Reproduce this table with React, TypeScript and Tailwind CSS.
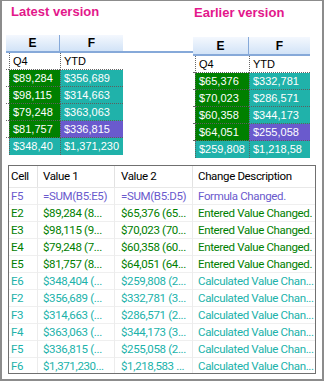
import React from "react";

type Cell = { text: string; bg: string };

const teal = "bg-[#20b2aa]";
const green = "bg-[#008000]";
const purple = "bg-[#6a5acd]";

const latestRows: Cell[][] = [
  [{ text: "$89,284", bg: green }, { text: "$356,689", bg: teal }],
  [{ text: "$98,115", bg: green }, { text: "$314,663", bg: teal }],
  [{ text: "$79,248", bg: green }, { text: "$363,063", bg: teal }],
  [{ text: "$81,757", bg: green }, { text: "$336,815", bg: purple }],
  [{ text: "$348,40", bg: teal }, { text: "$1,371,230", bg: teal }],
];

const earlierRows: Cell[][] = [
  [{ text: "$65,376", bg: green }, { text: "$332,781", bg: teal }],
  [{ text: "$70,023", bg: green }, { text: "$286,571", bg: teal }],
  [{ text: "$60,358", bg: green }, { text: "$344,173", bg: teal }],
  [{ text: "$64,051", bg: green }, { text: "$255,058", bg: purple }],
  [{ text: "$259,808", bg: teal }, { text: "$1,218,58", bg: teal }],
];

const changes = [
  { cell: "F5", v1: "=SUM(B5:E5)", v2: "=SUM(B5:D5)", desc: "Formula Changed.", color: "text-[#6a5acd]" },
  { cell: "E2", v1: "$89,284 (8...", v2: "$65,376 (65...", desc: "Entered Value Changed.", color: "text-[#008000]" },
  { cell: "E3", v1: "$98,115 (9...", v2: "$70,023 (70...", desc: "Entered Value Changed.", color: "text-[#008000]" },
  { cell: "E4", v1: "$79,248 (7...", v2: "$60,358 (60...", desc: "Entered Value Changed.", color: "text-[#008000]" },
  { cell: "E5", v1: "$81,757 (8...", v2: "$64,051 (64...", desc: "Entered Value Changed.", color: "text-[#008000]" },
  { cell: "E6", v1: "$348,404 (...", v2: "$259,808 (2...", desc: "Calculated Value Chan...", color: "text-[#20b2aa]" },
  { cell: "F2", v1: "$356,689 (...", v2: "$332,781 (3...", desc: "Calculated Value Chan...", color: "text-[#20b2aa]" },
  { cell: "F3", v1: "$314,663 (...", v2: "$286,571 (2...", desc: "Calculated Value Chan...", color: "text-[#20b2aa]" },
  { cell: "F4", v1: "$363,063 (...", v2: "$344,173 (3...", desc: "Calculated Value Chan...", color: "text-[#20b2aa]" },
  { cell: "F5", v1: "$336,815 (...", v2: "$255,058 (2...", desc: "Calculated Value Chan...", color: "text-[#20b2aa]" },
  { cell: "F6", v1: "$1,371,230...", v2: "$1,218,583 ...", desc: "Calculated Value Chan...", color: "text-[#20b2aa]" },
];

function SheetGrid({
  rows,
  gutter,
  eWidth,
  fWidth,
  headerH,
}: {
  rows: Cell[][];
  gutter: number;
  eWidth: number;
  fWidth: number;
  headerH: number;
}) {
  return (
    <div className="font-['Liberation_Sans',Arial,sans-serif] text-[11px]">
      {/* Column header */}
      <div className="flex border-b-2 border-[#86a9d9]" style={{ height: headerH }}>
        <div
          className="flex items-center justify-center font-bold text-[12px] text-black bg-gradient-to-b from-[#f4f8fe] to-[#d2e3f7] border-r border-[#86a9d9]"
          style={{ width: gutter + eWidth }}
        >
          E
        </div>
        <div
          className="flex items-center justify-center font-bold text-[12px] text-black bg-gradient-to-b from-[#f4f8fe] to-[#d2e3f7]"
          style={{ width: fWidth }}
        >
          F
        </div>
      </div>

      {/* Label row */}
      <div className="flex h-[17px]">
        <div className="border-b border-dotted border-[#666]" style={{ width: gutter }} />
        <div
          className="flex items-center pl-[3px] text-black border-l border-b border-dotted border-[#666]"
          style={{ width: eWidth }}
        >
          Q4
        </div>
        <div
          className="flex items-center pl-[3px] text-black border-l border-b border-dotted border-[#666]"
          style={{ width: fWidth }}
        >
          YTD
        </div>
      </div>

      {/* Values */}
      {rows.map((row, i) => (
        <div key={i} className="flex h-[17px]">
          <div
            className={i < rows.length - 1 ? "border-b border-dotted border-[#666]" : ""}
            style={{ width: gutter }}
          />
          {row.map((c, j) => (
            <div
              key={j}
              className={`flex items-center pl-[3px] text-white border-l border-dotted border-[#5e5e5e] ${c.bg} ${
                i < rows.length - 1 ? "border-b" : ""
              }`}
              style={{ width: j === 0 ? eWidth : fWidth }}
            >
              {c.text}
            </div>
          ))}
        </div>
      ))}
    </div>
  );
}

export default function App() {
  return (
    <div className="w-[325px] h-[382px] bg-white">
      <div className="w-[324px] h-[381px] border-2 border-t border-[#8c8c8c] flex flex-col overflow-hidden">
        {/* Two versions side by side */}
        <div className="flex h-[164px]">
          <div className="w-[191px] shrink-0">
            <div className="mt-[4px] ml-[9px] leading-none text-[13px] font-bold text-[#e3178b] font-['Liberation_Sans',Arial,sans-serif]">
              Latest version
            </div>
            <div className="mt-[17px] ml-[4px]">
              <SheetGrid rows={latestRows} gutter={3} eWidth={51} fWidth={63} headerH={18} />
            </div>
          </div>
          <div>
            <div className="mt-[5px] ml-[1px] leading-none text-[13px] font-bold text-[#e3178b] font-['Liberation_Sans',Arial,sans-serif]">
              Earlier version
            </div>
            <div className="mt-[18px]">
              <SheetGrid rows={earlierRows} gutter={2} eWidth={54} fWidth={61} headerH={19} />
            </div>
          </div>
        </div>

        {/* Change list */}
        <div className="ml-[6px] w-[308px] h-[209px] border border-[#707070] overflow-hidden font-['Roboto',sans-serif] text-[11.5px] tracking-[-0.35px]">
          <div className="grid grid-cols-[29px_77px_78px_1fr] h-[22px] border-b border-[#e8e8e8] text-black">
            <div className="flex items-center pl-[2px] border-r border-[#e2e2e2]">Cell</div>
            <div className="flex items-center pl-[5px] border-r border-[#e2e2e2]">Value 1</div>
            <div className="flex items-center pl-[6px] border-r border-[#e2e2e2]">Value 2</div>
            <div className="flex items-center pl-[5px] whitespace-nowrap">Change Description</div>
          </div>
          {changes.map((r, i) => (
            <div
              key={i}
              className={`grid grid-cols-[29px_77px_78px_1fr] h-[17px] border-b border-[#efefef] ${r.color}`}
            >
              <div className="flex items-center pl-[2px] border-r border-[#ececec]">{r.cell}</div>
              <div className="flex items-center pl-[5px] border-r border-[#ececec] whitespace-nowrap overflow-hidden">
                {r.v1}
              </div>
              <div className="flex items-center pl-[6px] border-r border-[#ececec] whitespace-nowrap overflow-hidden">
                {r.v2}
              </div>
              <div className="flex items-center pl-[5px] whitespace-nowrap overflow-hidden">{r.desc}</div>
            </div>
          ))}
        </div>
      </div>
    </div>
  );
}
